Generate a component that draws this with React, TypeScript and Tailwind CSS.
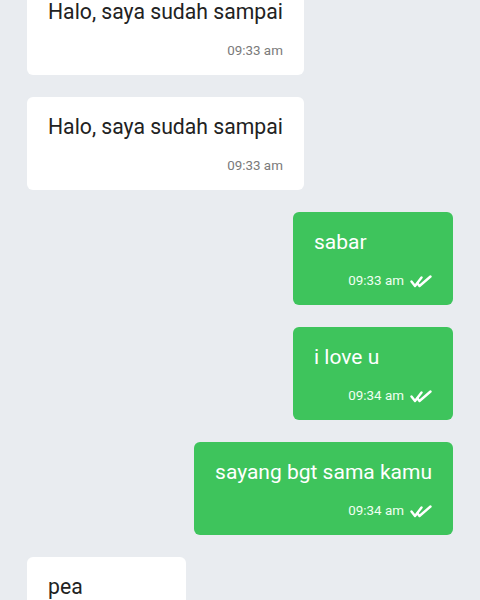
const messages = [
  { id: 1, text: "Halo, saya sudah sampai", time: "09:33 am", mine: false },
  { id: 2, text: "Halo, saya sudah sampai", time: "09:33 am", mine: false },
  { id: 3, text: "sabar", time: "09:33 am", mine: true },
  { id: 4, text: "i love u", time: "09:34 am", mine: true },
  { id: 5, text: "sayang bgt sama kamu", time: "09:34 am", mine: true },
  { id: 6, text: "pea", time: "09:34 am", mine: false },
];

function DoubleCheck() {
  return (
    <svg width="22" height="13" viewBox="0 0 22 13" fill="none" className="ml-[6px]">
      <path d="M1.5 6.5 L5 11 L11.5 2.5" stroke="white" strokeWidth="2.4" strokeLinecap="round" strokeLinejoin="round" />
      <path d="M7.5 8.5 L9.5 11 L20.5 1.5" stroke="white" strokeWidth="2.4" strokeLinecap="round" strokeLinejoin="round" />
    </svg>
  );
}

export default function App() {
  return (
    <div
      className="w-[480px] h-[600px] overflow-hidden bg-[#e9ecf0]"
      style={{ fontFamily: "Roboto, 'Liberation Sans', sans-serif" }}
    >
      <div className="-mt-[18px] flex flex-col gap-[22px] px-[27px]">
        {messages.map((m) => (
          <div key={m.id} className={m.mine ? "flex justify-end" : "flex justify-start"}>
            <div
              className={
                m.mine
                  ? "min-w-[160px] rounded-[6px] bg-[#3ec45c] pl-[21px] pr-[21px] pt-[16px] pb-[15px]"
                  : "min-w-[159px] rounded-[6px] bg-white pl-[21px] pr-[21px] pt-[16px] pb-[15px]"
              }
            >
              <div
                className={
                  m.mine
                    ? "text-[21px] leading-[28px] text-white"
                    : "text-[21.2px] leading-[28px] text-[#222]"
                }
              >
                {m.text}
              </div>
              <div className="mt-[16px] flex items-center justify-end h-[18px]">
                <span className={m.mine ? "text-[13.4px] text-[#f0fff2]" : "text-[13.4px] text-[#7a7a7a]"}>
                  {m.time}
                </span>
                {m.mine && <DoubleCheck />}
              </div>
            </div>
          </div>
        ))}
      </div>
    </div>
  );
}
